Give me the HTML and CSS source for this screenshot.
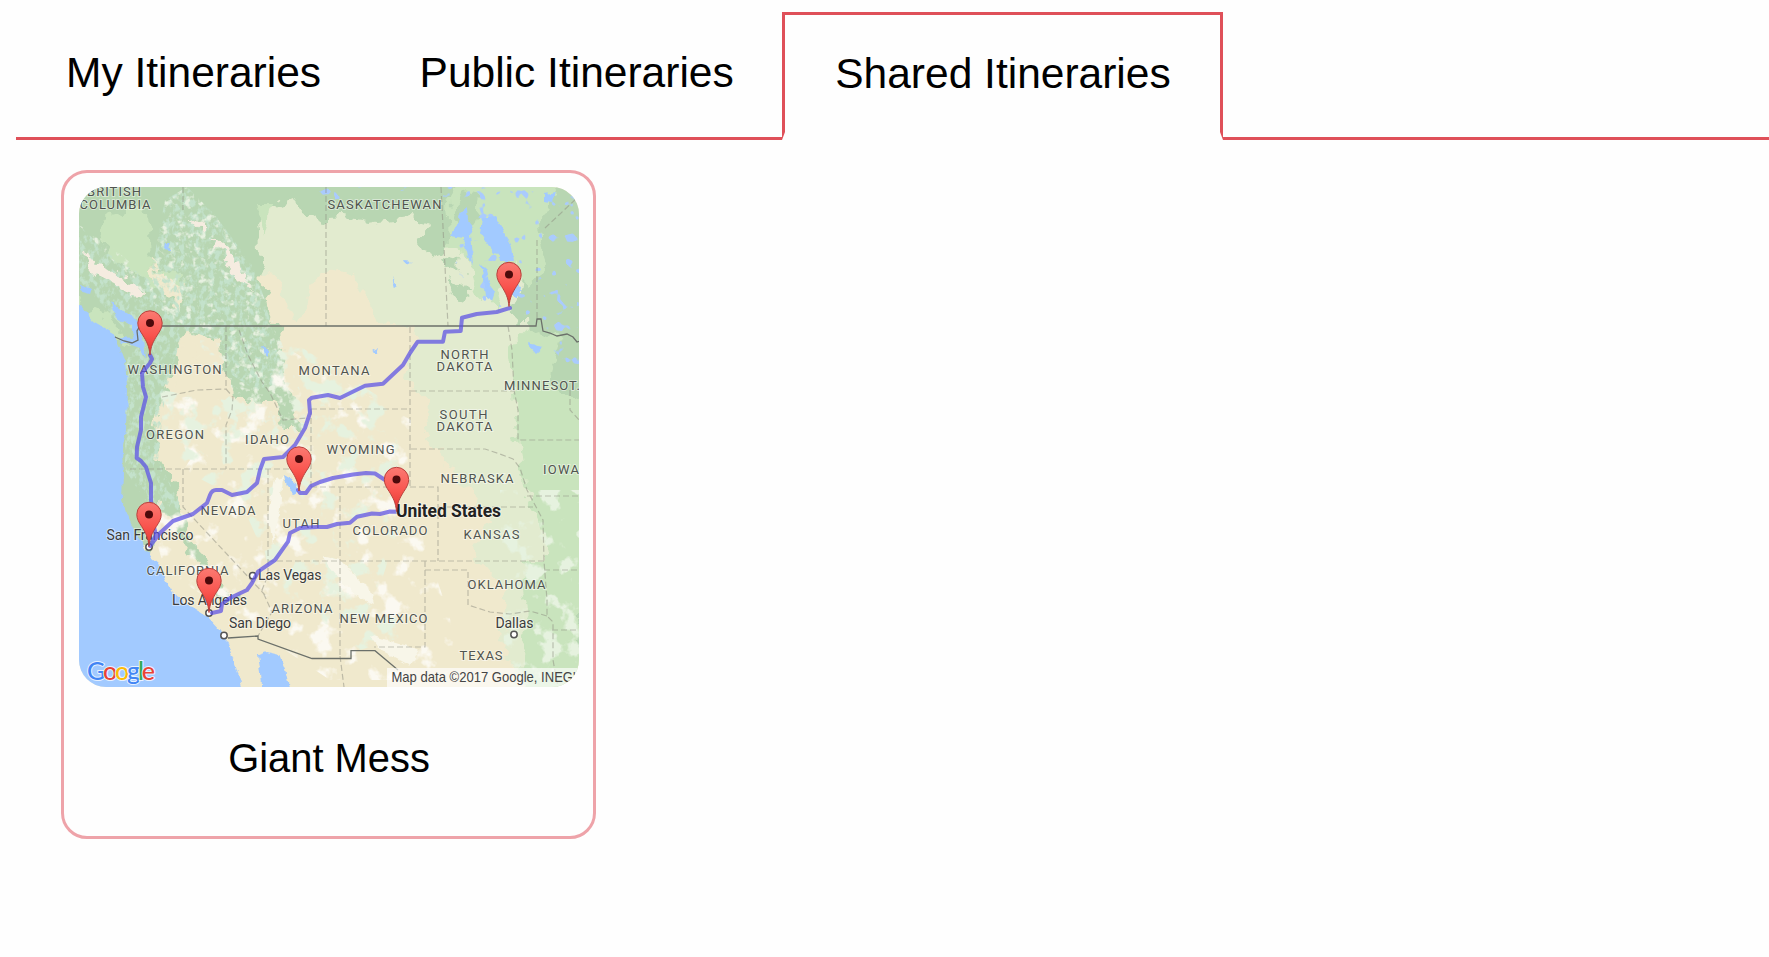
FILE: index.html
```html
<!DOCTYPE html>
<html lang="en">
<head>
<meta charset="utf-8">
<title>Shared Itineraries</title>
<link rel="stylesheet" href="styles.css">
</head>
<body>
<nav class="tabs">
  <a class="tab">My Itineraries</a>
  <a class="tab">Public Itineraries</a>
  <a class="tab tab-active">Shared Itineraries</a>
  <span class="tab-rest"></span>
</nav>
<main class="cards">
  <article class="card">
    <svg class="map" viewBox="79 187 500 500" role="img" aria-label="Route map">
      <defs>
        <filter id="rough" x="-5%" y="-5%" width="110%" height="110%">
          <feTurbulence type="fractalNoise" baseFrequency="0.06" numOctaves="3" seed="4"/>
          <feDisplacementMap in="SourceGraphic" scale="24" xChannelSelector="R" yChannelSelector="G"/>
        </filter>
        <filter id="coast" x="-5%" y="-5%" width="110%" height="110%">
          <feTurbulence type="fractalNoise" baseFrequency="0.12" numOctaves="2" seed="8"/>
          <feDisplacementMap in="SourceGraphic" scale="7" xChannelSelector="R" yChannelSelector="G"/>
        </filter>
        <filter id="ridges">
          <feTurbulence type="fractalNoise" baseFrequency="0.2 0.14" numOctaves="3" seed="12"/>
          <feColorMatrix values="0 0 0 0 .55  0 0 0 0 .76  0 0 0 0 .6  5 0 0 0 -2.3"/>
          <feComposite in2="SourceGraphic" operator="in"/>
        </filter>
        <filter id="glades">
          <feTurbulence type="fractalNoise" baseFrequency="0.13" numOctaves="3" seed="31"/>
          <feColorMatrix values="0 0 0 0 .80  0 0 0 0 .88  0 0 0 0 .75  5 0 0 0 -2.8"/>
          <feComposite in2="SourceGraphic" operator="in"/>
        </filter>
        <filter id="desert">
          <feTurbulence type="fractalNoise" baseFrequency="0.045" numOctaves="4" seed="6"/>
          <feColorMatrix values="0 0 0 0 .97  0 0 0 0 .95  0 0 0 0 .88  7 0 0 0 -4"/>
          <feComposite in2="SourceGraphic" operator="in"/>
        </filter>
        <filter id="woods">
          <feTurbulence type="fractalNoise" baseFrequency="0.05" numOctaves="4" seed="19"/>
          <feColorMatrix values="0 0 0 0 .79  0 0 0 0 .89  0 0 0 0 .74  9 0 0 0 -5"/>
          <feComposite in2="SourceGraphic" operator="in"/>
        </filter>
        <filter id="ponds">
          <feTurbulence type="fractalNoise" baseFrequency="0.09" numOctaves="2" seed="23"/>
          <feColorMatrix values="0 0 0 0 .4  0 0 0 0 .6  0 0 0 0 .98  18 0 0 0 -12"/>
          <feComposite in2="SourceGraphic" operator="in"/>
        </filter>
        <linearGradient id="pinFill" x1="0" y1="0" x2="0" y2="1">
          <stop offset="0" stop-color="#fb7a72"/>
          <stop offset=".55" stop-color="#f9544e"/>
          <stop offset="1" stop-color="#e0352f"/>
        </linearGradient>
        <g id="pin">
          <path d="M0 0C-.8-9-3.3-13.5-7.3-20C-10-24-12.2-27.500-12.2-32A12.200 12.200 0 0 1 12.200-32C12.200-27.500 10-24 7.300-20C3.300-13.500 .8-9 0 0Z" fill="url(#pinFill)" stroke="#b8423d" stroke-width="1"/>
          <circle cy="-32" r="4" fill="#4d0a0b"/>
        </g>
      </defs>

      <rect x="79" y="187" width="500" height="500" fill="#f0e9cd"/>

      <!-- prairie and plains -->
      <g filter="url(#rough)">
        <path fill="#e2ebcf" d="M240 170H600V700H530L500 640L505 590L475 555L490 520L460 480L430 440L425 400L408 380L415 326H385L365 290L335 268L307 285L300 326H262Z"/>
        <path fill="#c9e4bd" d="M430 170H600V700H530L518 660L528 625L522 590L548 560L541 520L525 490L518 440L514 390L508 350L530 326L520 285L515 262L495 310L478 295L470 260L455 250L440 235Z"/>
        <path fill="#b8d6b2" d="M60 170H460L448 200L450 245L430 258L422 245L430 225L405 217L370 222L340 218L320 220L300 205L288 200L265 210L253 220L255 250L263 270L267 307L280 327L283 360L290 393L300 430L285 430L275 400L237 400L223 373L217 340L186 333L173 360L170 373L160 400L155 430L160 463L177 487L182 510L190 540L212 567L236 600L222 600L197 560L173 530L160 500L153 510L151 560L120 520V500L118 470L120 360L60 300Z"/>
        <path fill="#b8d6b2" d="M460 190L480 195L478 215L464 235L452 220ZM560 180H600V405L570 395L548 380L560 340L530 330L525 290L545 265L538 225ZM521 280L530 290L528 322L514 322ZM448 280L475 290L470 300L455 294ZM440 255L462 258L460 272L448 270ZM600 590L580 602L553 603L556 613L573 622L567 640L585 660H600Z"/>
        <path fill="#c9e4bd" d="M100 218L142 208L150 235L151 270L175 275L186 285L165 288L140 280L105 255ZM60 292L105 316L133 346L60 310ZM255 205L270 205L262 240ZM525 560L545 590L540 620L520 660L532 687H580V560Z"/>
        <path fill="#f0e9cd" d="M151 260L163 280L184 284L180 310L170 300L152 275ZM186 335L200 360L217 365L215 345L226 390L230 415L245 430L190 440L163 432L168 395ZM262 275L267 307L279 327H300L290 310L280 280Z"/>
      </g>

      <!-- relief -->
      <path filter="url(#ridges)" d="M79 225L110 255L150 280L165 200L187 187L215 215L252 265L265 300L272 330L287 390L255 390L232 375L220 340L183 330L165 395L158 460L183 510L160 510L145 500L125 470V360L140 345L79 280Z"/>
      <path filter="url(#glades)" d="M79 225L110 245L150 280L165 200L187 187L215 215L255 275L300 390L310 440L240 440L230 380L150 300Z"/>
      <path filter="url(#desert)" d="M162 395L225 400L290 350L411 420L411 500L470 680H330L240 620L165 570L150 520L190 460Z"/>
      <path filter="url(#woods)" d="M160 390L225 400L290 340L400 410L395 540L375 600L425 630L360 650L280 590L240 500L165 460ZM500 490H579V687H505Z"/>
      <path filter="url(#ponds)" d="M420 187H579V370L548 360L515 310L470 300ZM300 187H430L330 200Z"/>
      <g filter="url(#rough)" fill="#f5ece0">
        <path d="M84 252L100 262L114 272L127 278L138 291L135 298L118 286L102 278L92 268ZM188 218L207 227L205 236ZM214 242L230 252L235 263L243 262L249 286L226 265Z"/>
      </g>
      <g filter="url(#coast)" fill="#f8f6e9">
        <path d="M275 478L283 476L280 510L272 545L268 520ZM322 556L340 560L355 576L370 590L374 604L360 598L342 582ZM370 635L420 650L410 666L380 650Z"/>
      </g>

      <!-- water -->
      <g filter="url(#coast)" fill="#a2caff">
        <path d="M70 303L82 307L93 321L113 333L120 347L125 360L127 387L126 430L122 450L123 473L122 500L128 517L133 528L143 542L145 552L158 563L165 580L175 597L197 610L208 617L220 630L227 643L235 663L246 700H70Z"/>
        <path d="M79 284L92 288L90 294L79 291ZM110 301L122 310L137 319L143 337L145 360L139 348L122 342L120 337L134 338L132 325L116 317Z"/>
        <path d="M258 655L267 652L280 655L286 670L293 700H263L261 673Z"/>
        <path d="M482 218L495 216L503 230L511 248L513 260L501 260L490 247L480 232ZM461 212L467 207L468 220L474 228L470 236L473 265L467 257L464 238L450 236L456 228ZM479 263L486 270L489 283L496 292L493 301L486 297L484 278ZM514 286L520 288L518 298L512 292ZM545 194L555 192L552 203L545 202ZM284 475L293 480L299 491L293 493L287 487ZM404 260L412 261L406 264ZM392 277L398 287L395 289ZM165 243L171 243L169 250L164 249ZM263 347L269 350L269 356L265 355ZM372 351L379 347L377 353ZM528 344L543 347L536 353Z"/>
      </g>

      <!-- state and province lines -->
      <g class="state-lines">
        <path d="M183 187V210M326 187V326M441 187L448 326M537 240V319M545 228L577 198"/>
        <path d="M162 397L197 390L227 389M226 326V389L233 397L232 410L226 425V469M239 330L248 355L262 382L270 393L283 420L307 418"/>
        <path d="M130 469H311M311 409H411M311 487V409M410 327V487M311 487H438V561M340 487V656M268 561H545M268 469V575L262 590L272 612L258 636M183 469V507L265 595"/>
        <path d="M425 561V647H374M425 570H468V605L490 612L510 614L530 611L547 616M438 507H533M411 449H485L500 454L513 459L520 468L527 490L535 505L543 520L544 561L547 600V616L553 622V660L558 687"/>
        <path d="M411 391H514M508 326L512 350L514 390L518 410V440H579M527 496H579M544 570H579M552 630H579M340 656L344 687M570 390V410L579 420"/>
      </g>
      <g class="country-lines">
        <path d="M115 337L124 341L132 343L138 340L137 331L140 326H536L537 319L541 319L543 331L550 333L557 336L567 334L573 337L577 342L580 341"/>
        <path d="M228 638L258 636V639L312 658.500H351V650.700H375L398 670"/>
      </g>

      <g class="labels">
        <text x="87" y="196" textLength="54">BRITISH</text>
        <text x="79.500" y="208.500" textLength="71">COLUMBIA</text>
        <text x="327.500" y="208.700" textLength="114">SASKATCHEWAN</text>
        <text x="127.500" y="373.600" textLength="94">WASHINGTON</text>
        <text x="298.500" y="375" textLength="71">MONTANA</text>
        <text x="440.500" y="358.600" textLength="48">NORTH</text>
        <text x="436.500" y="371.200" textLength="56">DAKOTA</text>
        <text x="504" y="390" textLength="76">MINNESOT.</text>
        <text x="439.500" y="418.600" textLength="48">SOUTH</text>
        <text x="436.500" y="431.300" textLength="56">DAKOTA</text>
        <text x="146" y="438.600" textLength="58">OREGON</text>
        <text x="245" y="443.600" textLength="44">IDAHO</text>
        <text x="326.500" y="453.500" textLength="68">WYOMING</text>
        <text x="440.500" y="482.500" textLength="73">NEBRASKA</text>
        <text x="543" y="474" textLength="36">IOWA</text>
        <text x="352.500" y="535" textLength="75">COLORADO</text>
        <text x="463.500" y="538.800" textLength="56">KANSAS</text>
        <text x="200.500" y="515" textLength="55">NEVADA</text>
        <text x="282.500" y="527.500" textLength="37">UTAH</text>
        <text x="146.500" y="575" textLength="82">CALIFORNIA</text>
        <text x="271.500" y="612.500" textLength="61">ARIZONA</text>
        <text x="339.500" y="622.500" textLength="88">NEW MEXICO</text>
        <text x="467.500" y="589" textLength="78">OKLAHOMA</text>
        <text x="459.500" y="660" textLength="43">TEXAS</text>
      </g>
      <g class="city-dots">
        <circle cx="149" cy="547" r="3.200"/>
        <circle cx="209" cy="613" r="3.200"/>
        <circle cx="252.700" cy="575.700" r="3.200"/>
        <circle cx="224" cy="635.500" r="3.200"/>
        <circle cx="514" cy="634.500" r="3.200"/>
      </g>
      <g class="cities">
        <text x="106.500" y="540" textLength="87">San Francisco</text>
        <text x="258" y="580" textLength="63.500">Las Vegas</text>
        <text x="172" y="605" textLength="75">Los Angeles</text>
        <text x="229" y="627.500" textLength="62">San Diego</text>
        <text x="495.500" y="627.500" textLength="38">Dallas</text>
      </g>

      <g class="routes">
        <path d="M150 355L152 359L150 363L142 373L143 387L146 397L141 417V430L137 447L136.700 458L141 461L146 467L151 483V500L153 523L156 535L150 546L160 533L173 521L193 514L207 503L210 495Q212 490 216 490L222 490L232 495L247 492L257 483L260 470L264 459L283 457L295 445L305 428L310 413L309 400L312 397.700L328 395L340 398L365 385.700L383 383.700L403 365L410 353L417.700 341.700H443L445 331.700L460.700 331L462 317.700L476.700 314L496.700 312L510 308"/>
        <path d="M298 490L300 493H306L311 486L320 482L333 478L353 474.500L366 473L375 473.500L385 480L391 482"/>
        <path d="M397 511.700L390 511.500L380 514L372 513.500L357 516.700L350 522.700L337 524L327 527L317 527L300 528L290 533L288 541.700L275 560L258 571.700L252 583L247 590L230 598L222 604L221 611L212 613"/>
      </g>

      <text class="country-name" x="396" y="516.800" textLength="105">United States</text>
      <use href="#pin" x="509" y="306.500"/>
      <use href="#pin" x="150" y="355"/>
      <use href="#pin" x="299" y="491"/>
      <use href="#pin" x="396.500" y="511.500"/>
      <use href="#pin" x="149" y="546.500"/>
      <use href="#pin" x="209" y="612.500"/>

      <rect x="387" y="668" width="192" height="19" fill="#fff" opacity=".65"/>
      <text class="credit" x="391.500" y="681.800" textLength="184" lengthAdjust="spacingAndGlyphs">Map data ©2017 Google, INEG'</text>
      <text class="brand" x="87" y="679.500" textLength="68"><tspan fill="#4285f4">G</tspan><tspan fill="#ea4335">o</tspan><tspan fill="#fbbc05">o</tspan><tspan fill="#4285f4">g</tspan><tspan fill="#34a853">l</tspan><tspan fill="#ea4335">e</tspan></text>
    </svg>
    <h2 class="card-title">Giant Mess</h2>
  </article>
</main>
</body>
</html>
```
FILE: styles.css
```css
* {
  box-sizing: border-box;
}

body {
  margin: 0;
  padding: 12px 0 0 16px;
  background: #fefefe;
  color: #000;
  font-family: "Liberation Sans", Arial, sans-serif;
  overflow: hidden;
}

.tabs {
  display: flex;
  height: 128px;
}

.tab {
  padding: 36px 48.5px 0 50px;
  border-bottom: 3px solid #df5059;
  font-size: 42.5px;
  line-height: 49px;
  white-space: nowrap;
}

.tab-active {
  width: 441px;
  padding: 34px 0 0 50px;
  border: 3px solid #df5059;
  border-bottom: 8px solid #fefefe;
}

.tab-rest {
  flex: 1;
  border-bottom: 3px solid #df5059;
}

.cards {
  display: flex;
  padding: 30px 45px;
}

.card {
  width: 535px;
  height: 669px;
  padding: 14px 14px 0 15px;
  border: 3px solid #eea3a9;
  border-radius: 26px;
}

.map {
  display: block;
  width: 500px;
  height: 500px;
  border-radius: 27px;
  overflow: hidden;
}

.card-title {
  margin: 48px 0 0;
  font-size: 39.9px;
  font-weight: 400;
  line-height: 46px;
  text-align: center;
}

.state-lines {
  fill: none;
  stroke: #8d8d80;
  stroke-width: 1.2;
  stroke-dasharray: 6 3;
  opacity: .5;
}

.country-lines {
  fill: none;
  stroke: #6b706a;
  stroke-width: 1.3;
}

.labels,
.cities,
.country-name {
  font-family: Roboto, sans-serif;
  paint-order: stroke;
  stroke: rgba(255, 255, 255, .45);
  stroke-width: 2px;
}

.labels {
  font-size: 13px;
  fill: #50544f;
}

.cities {
  font-size: 14px;
  fill: #3c3c3c;
}

.country-name {
  font-size: 17.5px;
  font-weight: 700;
  fill: #222;
}

.city-dots {
  fill: #fff;
  stroke: #555;
  stroke-width: 1.5;
}

.routes {
  fill: none;
  stroke: #5b50e6;
  stroke-width: 4;
  stroke-linejoin: round;
  stroke-linecap: round;
  opacity: .72;
}

.credit {
  font-family: "Liberation Sans", Arial, sans-serif;
  font-size: 14.5px;
  fill: #444;
}

.brand {
  font-family: Lato, sans-serif;
  font-size: 25px;
  font-weight: 500;
  paint-order: stroke;
  stroke: #e8f1ff;
  stroke-width: 2px;
}
```
